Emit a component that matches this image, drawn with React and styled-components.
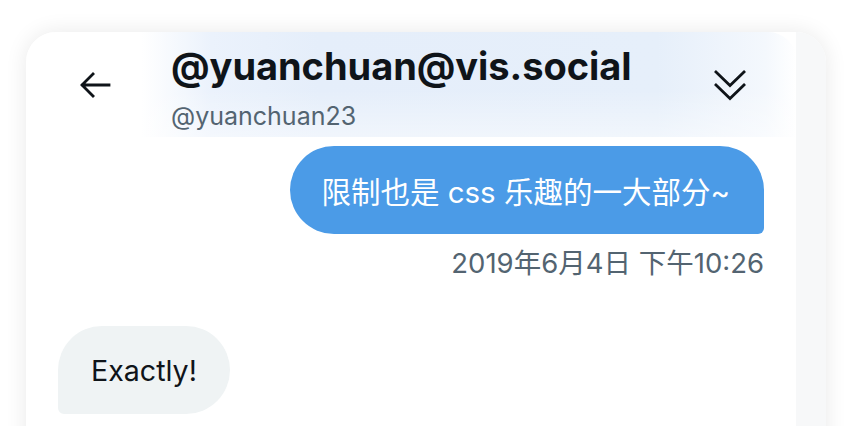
import React from "react";
import styled, { createGlobalStyle } from "styled-components";

const Global = createGlobalStyle`
  html, body {
    margin: 0;
    background: #ffffff;
  }
  body {
    font-family: Inter, "Noto Sans CJK SC", "Noto Sans", sans-serif;
    color: #0f1419;
  }
`;

const Page = styled.div`
  width: 854px;
  height: 426px;
  overflow: hidden;
  padding: 32px 28px 0 26px;
  box-sizing: border-box;
`;

const Card = styled.div`
  display: flex;
  height: 460px;
  background: #ffffff;
  border-radius: 30px 30px 0 0;
  overflow: hidden;
  box-shadow: 0 0 22px rgba(0, 0, 0, 0.09);
`;

const Main = styled.div`
  flex: 1;
  display: flex;
  flex-direction: column;
`;

const Gutter = styled.div`
  width: 30px;
  background: #f7f8f9;
`;

const Header = styled.header`
  height: 105px;
  display: flex;
  align-items: center;
  padding: 0 38px 0 41px;
  box-sizing: border-box;
  border-top-right-radius: 28px;
  background:
    linear-gradient(180deg, rgba(255, 255, 255, 0) 55%, rgba(255, 255, 255, 0.45) 100%),
    linear-gradient(90deg, #ffffff 15%, #ebf2fc 24%, #e5eefa 38%, #e6effa 82%, #f4f8fd 96%, #ffffff 100%);
`;

const IconButton = styled.button`
  width: 56px;
  height: 56px;
  flex: none;
  display: flex;
  align-items: center;
  justify-content: center;
  border: none;
  background: transparent;
  padding: 0;
  color: #0f1419;
`;

const Titles = styled.div`
  flex: 1;
  align-self: flex-start;
  margin-left: 48px;
  padding-top: 12px;
  display: flex;
  flex-direction: column;
`;

const Title = styled.h1`
  margin: 0;
  font-size: 38px;
  font-weight: 700;
  line-height: 44px;
  letter-spacing: -0.05px;
`;

const Handle = styled.div`
  margin-top: 12px;
  font-size: 25px;
  line-height: 32px;
  color: #536471;
`;

const Thread = styled.div`
  display: flex;
  flex-direction: column;
  padding: 9px 32px 0;
`;

const Bubble = styled.div`
  align-self: ${(p) => (p.$mine ? "flex-end" : "flex-start")};
  height: 88px;
  display: flex;
  align-items: center;
  padding: ${(p) => (p.$mine ? "0 34px 0 31px" : "0 33px")};
  box-sizing: border-box;
  font-size: ${(p) => (p.$mine ? "29.5px" : "28.6px")};
  color: ${(p) => (p.$mine ? "#ffffff" : "#0f1419")};
  background: ${(p) => (p.$mine ? "#4b9be7" : "#eff3f4")};
  border-radius: ${(p) => (p.$mine ? "44px 44px 6px 44px" : "44px 44px 44px 6px")};
`;

const Stamp = styled.div`
  align-self: flex-end;
  margin-top: 13px;
  margin-bottom: 47px;
  font-size: 27.5px;
  line-height: 32px;
  color: #536471;
`;

const BackIcon = () => (
  <svg width="32" height="32" viewBox="0 0 32 32" fill="none" stroke="currentColor" strokeWidth="2.8" strokeLinecap="square" strokeLinejoin="miter">
    <path d="M3.5 16 H30 M14 5 L3 16 L14 27" />
  </svg>
);

const ChevronsIcon = () => (
  <svg width="32" height="32" viewBox="0 0 32 32" fill="none" stroke="currentColor" strokeWidth="2.8" strokeLinecap="square">
    <path d="M2 3 L16 16.5 L30 3" />
    <path d="M2 16 L16 29.5 L30 16" />
  </svg>
);

export default function App() {
  return (
    <>
      <Global />
      <Page>
        <Card>
          <Main>
            <Header>
              <IconButton aria-label="Back">
                <BackIcon />
              </IconButton>
              <Titles>
                <Title>@yuanchuan@vis.social</Title>
                <Handle>@yuanchuan23</Handle>
              </Titles>
              <IconButton aria-label="Scroll down">
                <ChevronsIcon />
              </IconButton>
            </Header>
            <Thread>
              <Bubble $mine>限制也是 css 乐趣的一大部分~</Bubble>
              <Stamp>2019年6月4日 下午10:26</Stamp>
              <Bubble>Exactly!</Bubble>
            </Thread>
          </Main>
          <Gutter />
        </Card>
      </Page>
    </>
  );
}
